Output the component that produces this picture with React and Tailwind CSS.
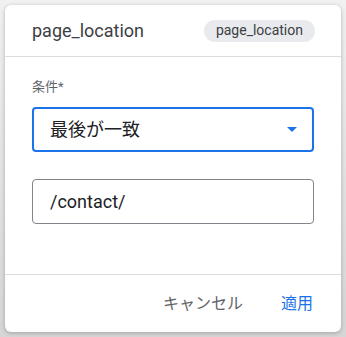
const font = { fontFamily: '"Roboto", "Noto Sans CJK JP", sans-serif' };

export default function App() {
  return (
    <div
      className="w-[346px] h-[337px] p-[5px] bg-[#dcdcdc] bg-gradient-to-b from-[#f1f1f1] to-[#d6d6d6]"
      style={font}
    >
      <div className="w-[336px] h-[327px] bg-white rounded-[6px] shadow-[0_1px_4px_rgba(0,0,0,0.25)] flex flex-col">
        {/* Header */}
        <div className="h-[52px] pl-[27px] pr-[26px] flex items-center justify-between border-b border-[#dadce0]">
          <h2 className="text-[18px] text-[#3c4043] leading-none">page_location</h2>
          <span className="h-[22px] px-[12px] rounded-full bg-[#e8eaed] text-[14px] text-[#3c4043] flex items-center">
            page_location
          </span>
        </div>

        {/* Body */}
        <div className="flex-1 px-[27px] pt-[22px] border-b border-[#dadce0]">
          <label className="block text-[13px] leading-4 text-[#5f6368]">条件*</label>
          <div className="mt-[12px] h-[45px] rounded-[4px] border-2 border-[#1a73e8] flex items-center justify-between pl-[16px] pr-[15px]">
            <span className="text-[18px] text-[#202124]">最後が一致</span>
            <svg width="10" height="5" viewBox="0 0 10 5">
              <path d="M0 0 L10 0 L5 5 Z" fill="#1a73e8" />
            </svg>
          </div>
          <div className="mt-[27px] h-[45px] rounded-[4px] border border-[#80868b] flex items-center pl-[17px]">
            <span className="text-[18px] text-[#202124]">/contact/</span>
          </div>
        </div>

        {/* Footer */}
        <div className="h-[57px] flex items-center justify-end pr-[28px] gap-[38px]">
          <button className="text-[16px] text-[#5f6368]">キャンセル</button>
          <button className="text-[16px] text-[#1a73e8]">適用</button>
        </div>
      </div>
    </div>
  );
}
